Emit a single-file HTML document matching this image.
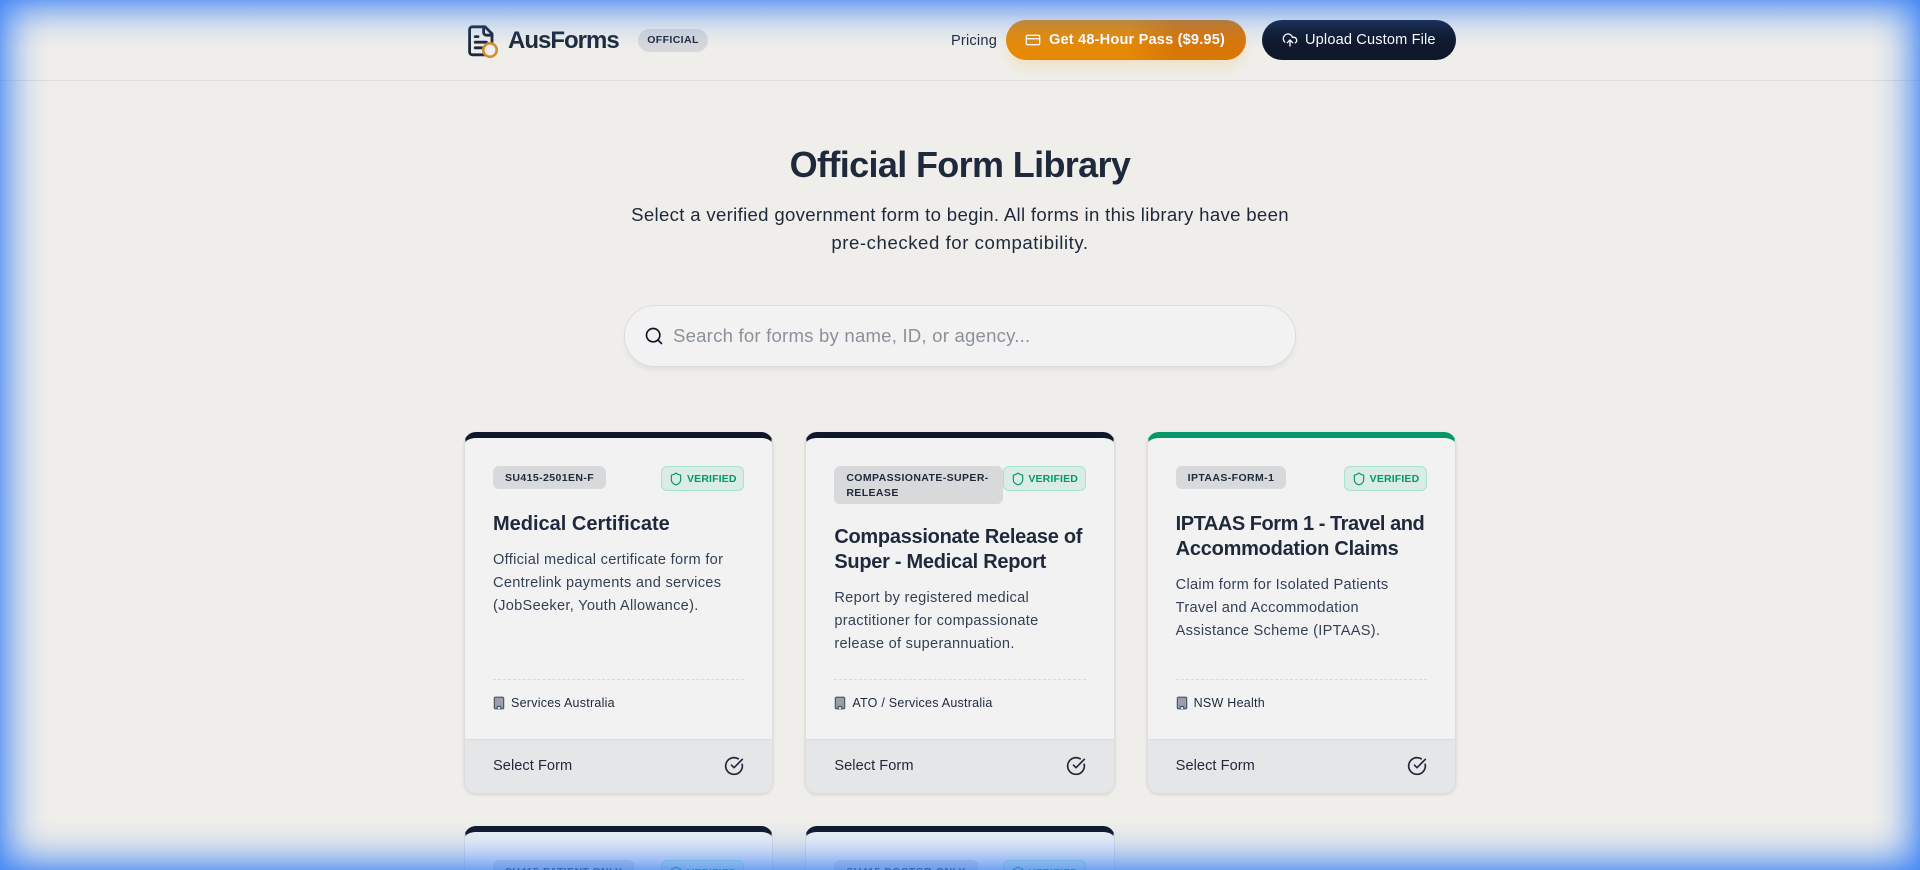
<!DOCTYPE html>
<html lang="en">
<head>
<meta charset="utf-8">
<title>AusForms - Official Form Library</title>
<style>
*{box-sizing:border-box;margin:0;padding:0}
html,body{width:1920px;height:870px;overflow:hidden;background:#efeeea;font-family:"Liberation Sans",Arial,sans-serif;color:#1e293b}
#page{position:relative;width:1920px;height:870px;overflow:hidden;background:#efeeea}
.abs,.t{position:absolute}
.t{white-space:nowrap}
.glow{position:absolute;left:0;top:0;width:1920px;height:870px;z-index:50;pointer-events:none;background:
linear-gradient(to bottom,rgba(59,130,246,.71) 0,rgba(59,130,246,.46) 10px,rgba(59,130,246,.26) 20px,rgba(59,130,246,.11) 30px,rgba(59,130,246,.04) 40px,rgba(59,130,246,0) 50px),
linear-gradient(to top,rgba(59,130,246,.71) 0,rgba(59,130,246,.46) 10px,rgba(59,130,246,.26) 20px,rgba(59,130,246,.11) 30px,rgba(59,130,246,.04) 40px,rgba(59,130,246,0) 50px),
linear-gradient(to right,rgba(59,130,246,.71) 0,rgba(59,130,246,.46) 10px,rgba(59,130,246,.26) 20px,rgba(59,130,246,.11) 30px,rgba(59,130,246,.04) 40px,rgba(59,130,246,0) 50px),
linear-gradient(to left,rgba(59,130,246,.71) 0,rgba(59,130,246,.46) 10px,rgba(59,130,246,.26) 20px,rgba(59,130,246,.11) 30px,rgba(59,130,246,.04) 40px,rgba(59,130,246,0) 50px)}
header{position:absolute;left:0;top:0;width:1920px;height:81px;border-bottom:1px solid #dcdcde}
.brand{left:508px;top:24px;font-size:24px;line-height:33px;font-weight:700;letter-spacing:-1px}
.pill{left:638px;top:29px;width:70px;height:23px;border-radius:12px;background:#d6d7da;font-size:10.5px;line-height:23px;font-weight:700;letter-spacing:.4px;text-align:center}
.pricing{left:951px;top:31px;font-size:14.6px;line-height:20px;letter-spacing:.2px;color:#1e293b}
.btn{top:20px;height:40px;border-radius:20px;color:#fff;font-size:14.6px;line-height:41px}
.orange{left:1006px;width:240px;background:linear-gradient(100deg,#e68a05 50%,#d97706 70%);box-shadow:0 8px 14px -3px rgba(245,158,11,.2);font-weight:700}
.dark{left:1262px;width:194px;background:#0f172a}
.btn svg{position:absolute}
.btn span{position:absolute;white-space:nowrap}
h1{left:660px;width:600px;top:142px;text-align:center;font-size:36px;line-height:46px;font-weight:700;letter-spacing:-.64px;color:#1e293b}
.sub{left:560px;width:800px;text-align:center;font-size:18.6px;line-height:28px;color:#1e293b;letter-spacing:.32px}
.search{left:624px;top:305px;width:672px;height:62px;border-radius:31px;background:#f2f2f3;border:1px solid #dddddd;box-shadow:0 4px 6px -1px rgba(0,0,0,.06)}
.ph{left:673px;top:322px;font-size:18.6px;line-height:28px;color:#8b919b;letter-spacing:.2px}
.card{top:432px;width:309.33px;height:362px;background:#f2f2f3;border-radius:12px;border:1px solid #dcdcdd;border-top:6px solid #0f172a;box-shadow:0 1px 3px rgba(0,0,0,.1)}
.card.g{border-top-color:#059669}
.card.low{top:826px;height:44px;border-bottom:0;border-radius:12px 12px 0 0;box-shadow:none}
.id{position:absolute;left:28px;top:28px;background:#d8d9db;border-radius:6px;font-size:10.5px;line-height:15px;font-weight:700;letter-spacing:.4px;padding:5px 12px 3px;color:#1e293b;white-space:nowrap}
.ver{position:absolute;top:28px;right:28px;width:83px;height:25px;border-radius:6px;background:#d9ece6;border:1px solid #a7e3cd;color:#059669;font-size:10.5px;line-height:24px;font-weight:700;letter-spacing:.15px;padding-left:24.7px}
.ver svg{position:absolute;left:7px;top:5px}
.low .id,.low .ver{height:10px;overflow:hidden;border-bottom:0;border-radius:6px 6px 0 0}
.title{position:absolute;left:28px;font-size:20px;line-height:25px;font-weight:700;color:#1e293b;white-space:nowrap}
.desc{position:absolute;left:28px;font-size:14.6px;line-height:23px;color:#334155;letter-spacing:.29px;white-space:nowrap}
.dash{position:absolute;left:28px;right:28px;top:240.5px;border-top:1px dashed #d9d9db}
.ag{position:absolute;left:46px;top:255.5px;font-size:12.5px;line-height:18px;color:#1e293b;letter-spacing:.25px;white-space:nowrap}
.ag-i{position:absolute;left:27px;top:257.5px}
.foot{position:absolute;left:0;right:0;top:301px;height:54px;background:#e5e6e8;border-top:1px solid #dcdcde;border-radius:0 0 11px 11px;font-size:14.6px;line-height:53px;padding-left:28px;letter-spacing:.05px;color:#1e293b}
.foot svg{position:absolute;right:28px;top:16px}
</style>
</head>
<body>
<div id="page">
<header>
  <svg class="abs" style="left:463.8px;top:23.6px" width="33.6" height="33.6" viewBox="0 0 24 24" fill="none" stroke="#1e293b" stroke-width="2" stroke-linecap="round" stroke-linejoin="round"><path d="M15 2H6a2 2 0 0 0-2 2v16a2 2 0 0 0 2 2h12a2 2 0 0 0 2-2V7Z"/><path d="M14 2v4a2 2 0 0 0 2 2h4"/><path d="M10 9H8"/><path d="M16 13H8"/><path d="M16 17H8"/></svg>
  <svg class="abs" style="left:480px;top:40px" width="20" height="20" viewBox="0 0 20 20"><circle cx="10" cy="10" r="6.7" fill="#f0f0f0" stroke="#d98a2b" stroke-width="2.6"/></svg>
  <div class="t brand">AusForms</div>
  <div class="abs pill">OFFICIAL</div>
  <div class="t pricing">Pricing</div>
  <div class="abs btn orange">
    <svg style="left:19px;top:12px" width="16" height="16" viewBox="0 0 24 24" fill="none" stroke="#fff" stroke-width="2" stroke-linecap="round" stroke-linejoin="round"><rect x="2" y="5" width="20" height="14" rx="2"/><line x1="2" y1="10" x2="22" y2="10"/></svg>
    <span style="left:43px;letter-spacing:.17px">Get 48-Hour Pass ($9.95)</span>
  </div>
  <div class="abs btn dark">
    <svg style="left:20px;top:12px" width="16" height="16" viewBox="0 0 24 24" fill="none" stroke="#fff" stroke-width="2" stroke-linecap="round" stroke-linejoin="round"><path d="M4.2 15.1A7 7 0 1 1 15.71 8h1.79a4.5 4.5 0 0 1 2.5 8.242"/><path d="M12 12v9"/><path d="m16 16-4-4-4 4"/></svg>
    <span style="left:43px;letter-spacing:.14px">Upload Custom File</span>
  </div>
</header>

<h1 class="abs">Official Form Library</h1>
<div class="abs sub" style="top:201px">Select a verified government form to begin. All forms in this library have been</div>
<div class="abs sub" style="top:229px;letter-spacing:.56px">pre-checked for compatibility.</div>

<div class="abs search"></div>
<svg class="abs" style="left:644px;top:326px" width="20" height="20" viewBox="0 0 24 24" fill="none" stroke="#0f172a" stroke-width="2" stroke-linecap="round" stroke-linejoin="round"><circle cx="11" cy="11" r="8"/><path d="m21 21-4.3-4.3"/></svg>
<div class="t ph">Search for forms by name, ID, or agency...</div>

<div class="abs card" style="left:464px">
  <div class="id">SU415-2501EN-F</div>
  <div class="ver"><svg width="14" height="14" viewBox="0 0 24 24" fill="none" stroke="#059669" stroke-width="2" stroke-linecap="round" stroke-linejoin="round"><path d="M20 13c0 5-3.5 7.5-7.66 8.95a1 1 0 0 1-.67-.01C7.5 20.5 4 18 4 13V6a1 1 0 0 1 1-1c2 0 4.5-1.2 6.24-2.72a1.17 1.17 0 0 1 1.52 0C14.51 3.81 17 5 19 5a1 1 0 0 1 1 1z"/></svg>VERIFIED</div>
  <div class="title" style="top:74px">Medical Certificate</div>
  <div class="desc" style="top:111px">Official medical certificate form for<br>Centrelink payments and services<br>(JobSeeker, Youth Allowance).</div>
  <div class="dash"></div>
  <svg class="ag-i" width="14" height="14" viewBox="0 0 24 24" fill="#9a9ea6" stroke="#475569" stroke-width="2" stroke-linecap="round" stroke-linejoin="round"><rect x="4" y="2" width="16" height="20" rx="2"/><path d="M9 22v-4h6v4" fill="#f2f2f3"/></svg>
  <div class="ag">Services Australia</div>
  <div class="foot">Select Form<svg width="20" height="20" viewBox="0 0 24 24" fill="none" stroke="#1e293b" stroke-width="2" stroke-linecap="round" stroke-linejoin="round"><path d="M21.801 10A10 10 0 1 1 17 3.335"/><path d="m9 11 3 3L22 4"/></svg></div>
</div>

<div class="abs card" style="left:805.33px">
  <div class="id" style="width:169px">COMPASSIONATE-SUPER-<br>RELEASE</div>
  <div class="ver"><svg width="14" height="14" viewBox="0 0 24 24" fill="none" stroke="#059669" stroke-width="2" stroke-linecap="round" stroke-linejoin="round"><path d="M20 13c0 5-3.5 7.5-7.66 8.95a1 1 0 0 1-.67-.01C7.5 20.5 4 18 4 13V6a1 1 0 0 1 1-1c2 0 4.5-1.2 6.24-2.72a1.17 1.17 0 0 1 1.52 0C14.51 3.81 17 5 19 5a1 1 0 0 1 1 1z"/></svg>VERIFIED</div>
  <div class="title" style="top:87px;letter-spacing:-.28px">Compassionate Release of<br>Super - Medical Report</div>
  <div class="desc" style="top:149px">Report by registered medical<br>practitioner for compassionate<br>release of superannuation.</div>
  <div class="dash"></div>
  <svg class="ag-i" width="14" height="14" viewBox="0 0 24 24" fill="#9a9ea6" stroke="#475569" stroke-width="2" stroke-linecap="round" stroke-linejoin="round"><rect x="4" y="2" width="16" height="20" rx="2"/><path d="M9 22v-4h6v4" fill="#f2f2f3"/></svg>
  <div class="ag">ATO / Services Australia</div>
  <div class="foot">Select Form<svg width="20" height="20" viewBox="0 0 24 24" fill="none" stroke="#1e293b" stroke-width="2" stroke-linecap="round" stroke-linejoin="round"><path d="M21.801 10A10 10 0 1 1 17 3.335"/><path d="m9 11 3 3L22 4"/></svg></div>
</div>

<div class="abs card g" style="left:1146.67px">
  <div class="id">IPTAAS-FORM-1</div>
  <div class="ver"><svg width="14" height="14" viewBox="0 0 24 24" fill="none" stroke="#059669" stroke-width="2" stroke-linecap="round" stroke-linejoin="round"><path d="M20 13c0 5-3.5 7.5-7.66 8.95a1 1 0 0 1-.67-.01C7.5 20.5 4 18 4 13V6a1 1 0 0 1 1-1c2 0 4.5-1.2 6.24-2.72a1.17 1.17 0 0 1 1.52 0C14.51 3.81 17 5 19 5a1 1 0 0 1 1 1z"/></svg>VERIFIED</div>
  <div class="title" style="top:74px"><span style="letter-spacing:-.47px">IPTAAS Form 1 - Travel and</span><br><span style="letter-spacing:-.25px">Accommodation Claims</span></div>
  <div class="desc" style="top:136px">Claim form for Isolated Patients<br>Travel and Accommodation<br>Assistance Scheme (IPTAAS).</div>
  <div class="dash"></div>
  <svg class="ag-i" width="14" height="14" viewBox="0 0 24 24" fill="#9a9ea6" stroke="#475569" stroke-width="2" stroke-linecap="round" stroke-linejoin="round"><rect x="4" y="2" width="16" height="20" rx="2"/><path d="M9 22v-4h6v4" fill="#f2f2f3"/></svg>
  <div class="ag">NSW Health</div>
  <div class="foot">Select Form<svg width="20" height="20" viewBox="0 0 24 24" fill="none" stroke="#1e293b" stroke-width="2" stroke-linecap="round" stroke-linejoin="round"><path d="M21.801 10A10 10 0 1 1 17 3.335"/><path d="m9 11 3 3L22 4"/></svg></div>
</div>

<div class="abs card low" style="left:464px">
  <div class="id">SU415-PATIENT-ONLY</div>
  <div class="ver"><svg width="14" height="14" viewBox="0 0 24 24" fill="none" stroke="#059669" stroke-width="2"><path d="M20 13c0 5-3.5 7.5-7.66 8.95a1 1 0 0 1-.67-.01C7.5 20.5 4 18 4 13V6a1 1 0 0 1 1-1c2 0 4.5-1.2 6.24-2.72a1.17 1.17 0 0 1 1.52 0C14.51 3.81 17 5 19 5a1 1 0 0 1 1 1z"/></svg>VERIFIED</div>
</div>
<div class="abs card low" style="left:805.33px">
  <div class="id">SU415-DOCTOR-ONLY</div>
  <div class="ver"><svg width="14" height="14" viewBox="0 0 24 24" fill="none" stroke="#059669" stroke-width="2"><path d="M20 13c0 5-3.5 7.5-7.66 8.95a1 1 0 0 1-.67-.01C7.5 20.5 4 18 4 13V6a1 1 0 0 1 1-1c2 0 4.5-1.2 6.24-2.72a1.17 1.17 0 0 1 1.52 0C14.51 3.81 17 5 19 5a1 1 0 0 1 1 1z"/></svg>VERIFIED</div>
</div>

<div class="glow"></div>
</div>
</body>
</html>
